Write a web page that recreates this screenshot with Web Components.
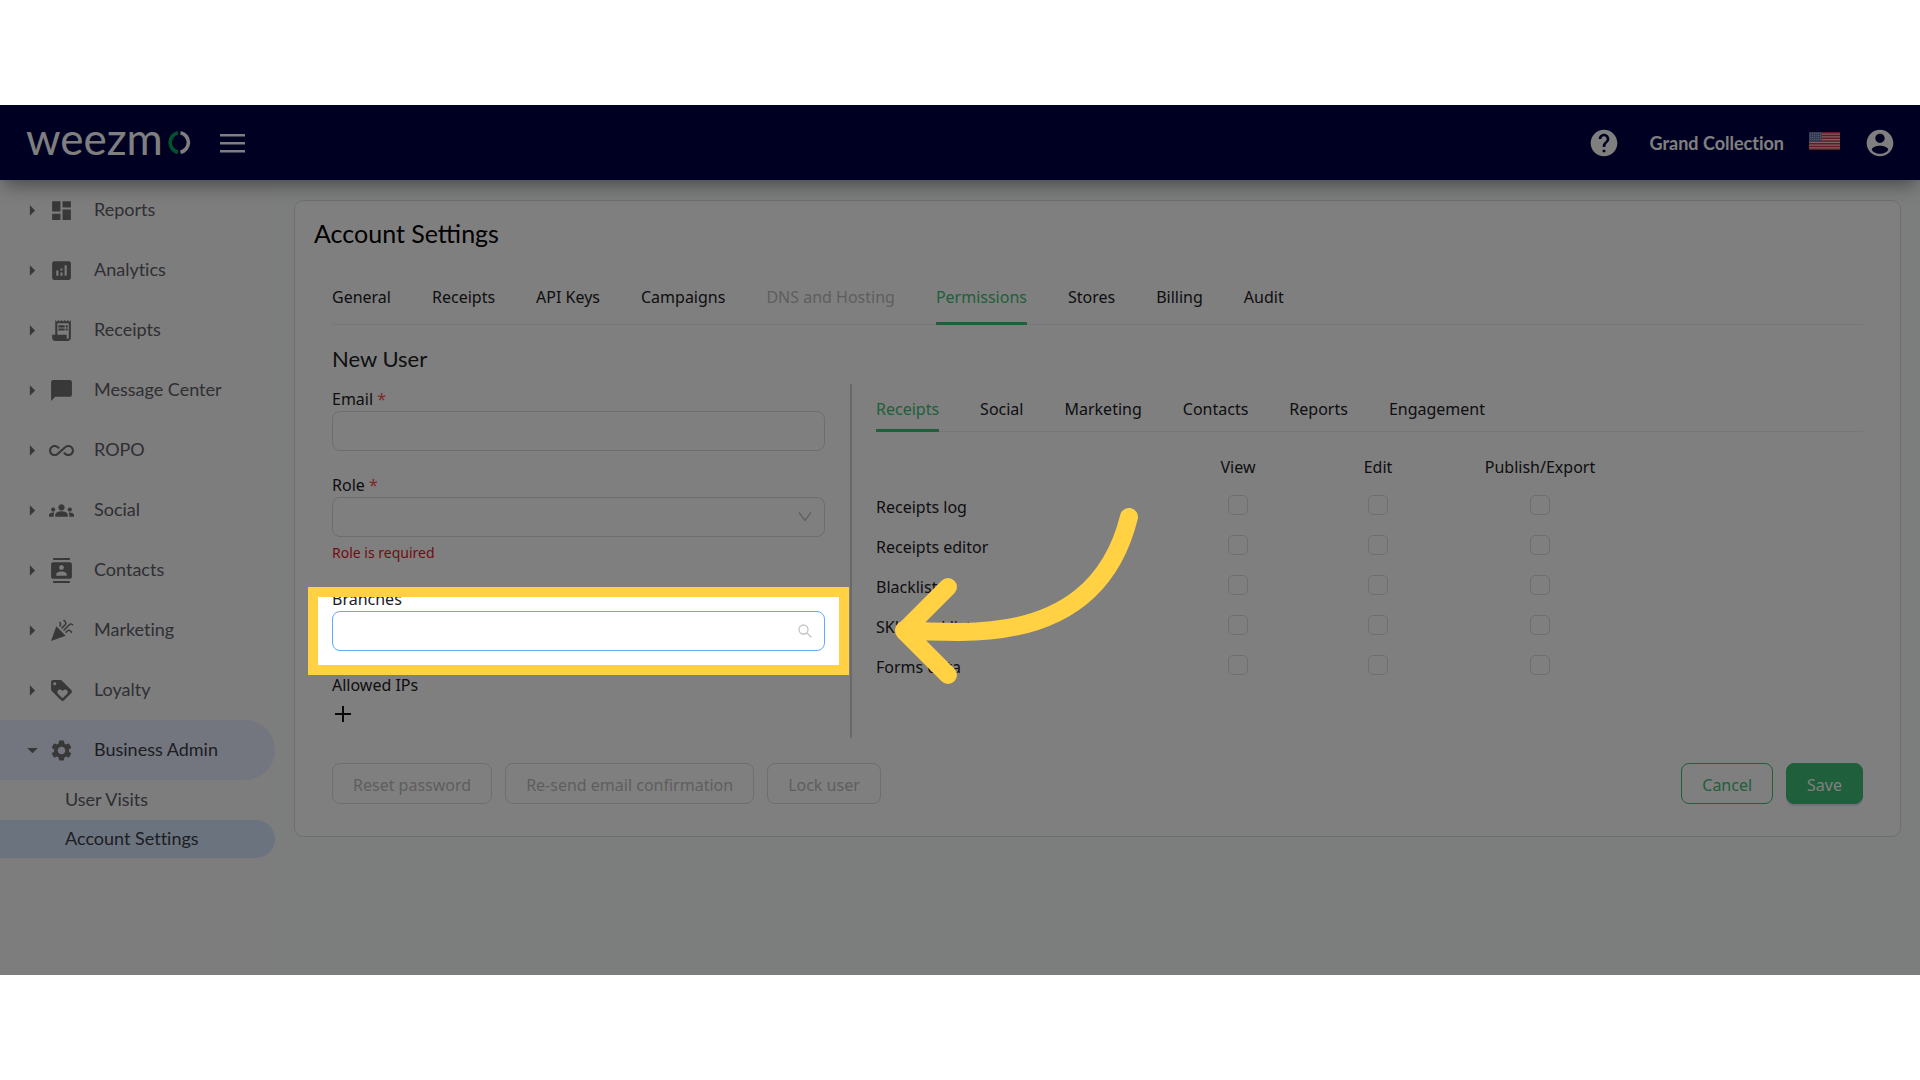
<!DOCTYPE html>
<html lang="en">
<head>
<meta charset="utf-8">
<title>Weezmo – Account Settings</title>
<style>
html,body{margin:0}
body{box-sizing:border-box;min-height:100vh;padding:105px 0;display:flex;flex-direction:column;background:#fff;
 --green:#3ebe76;--text:#202024;--ui:"Noto Sans","Open Sans",sans-serif;--brand:Lato,"Open Sans",sans-serif;
 font-family:var(--ui);font-size:16px;line-height:24px;color:var(--text);font-variant-ligatures:none}
</style>
</head>
<body>
<wz-app>
  <wz-header slot="header" account="Grand Collection"></wz-header>
  <nav slot="nav" aria-label="Main">
    <wz-nav-item icon="dashboard">Reports</wz-nav-item>
    <wz-nav-item icon="analytics">Analytics</wz-nav-item>
    <wz-nav-item icon="receipt">Receipts</wz-nav-item>
    <wz-nav-item icon="chat">Message Center</wz-nav-item>
    <wz-nav-item icon="infinite">ROPO</wz-nav-item>
    <wz-nav-item icon="groups">Social</wz-nav-item>
    <wz-nav-item icon="contacts">Contacts</wz-nav-item>
    <wz-nav-item icon="celebration">Marketing</wz-nav-item>
    <wz-nav-item icon="loyalty">Loyalty</wz-nav-item>
    <wz-nav-item icon="settings" open>Business Admin</wz-nav-item>
    <wz-nav-sub>User Visits</wz-nav-sub>
    <wz-nav-sub active>Account Settings</wz-nav-sub>
  </nav>
  <wz-card heading="Account Settings">
    <wz-tabs items="General,Receipts,API Keys,Campaigns,DNS and Hosting,Permissions,Stores,Billing,Audit" selected="Permissions" disabled="DNS and Hosting" style="--tab-top:12px;--tab-bottom:16px"></wz-tabs>
    <wz-user-form heading="New User">
      <wz-field slot="fields" label="Email" required></wz-field>
      <wz-field slot="fields" label="Role" kind="select" required error="Role is required"></wz-field>
      <wz-field slot="fields" label="Branches" kind="search"><wz-spotlight></wz-spotlight></wz-field>
      <wz-ip-list slot="fields"></wz-ip-list>
      <wz-tabs slot="rights" items="Receipts,Social,Marketing,Contacts,Reports,Engagement" selected="Receipts" style="--tab-top:13px;--tab-bottom:11px"></wz-tabs>
      <wz-rights slot="rights" rows="Receipts log,Receipts editor,Blacklist,SKU blacklist,Forms data" columns="View,Edit,Publish/Export"></wz-rights>
    </wz-user-form>
    <wz-actions></wz-actions>
  </wz-card>
</wz-app>
<script>
const ICONS={
dashboard:'M3 13h8V3H3v10zm0 8h8v-6H3v6zm10 0h8V11h-8v10zm0-18v6h8V3h-8z',
analytics:'M19 3H5c-1.1 0-2 .9-2 2v14c0 1.1.9 2 2 2h14c1.1 0 2-.9 2-2V5c0-1.1-.9-2-2-2zM9 17H7v-5h2v5zm4 0h-2v-3h2v3zm0-5h-2v-2h2v2zm4 5h-2V7h2v10z',
receipt:'M19.5 3.5 18 2l-1.5 1.5L15 2l-1.5 1.5L12 2l-1.5 1.5L9 2 7.5 3.5 6 2v14H3v3c0 1.66 1.34 3 3 3h12c1.66 0 3-1.34 3-3V2l-1.5 1.5zM19 19c0 .55-.45 1-1 1s-1-.45-1-1v-3H8V5h11v14zM9 7h6v2H9zM16 7h2v2h-2zM9 10h6v2H9zM16 10h2v2h-2z',
chat:'M20 2H4c-1.1 0-2 .9-2 2v18l4-4h14c1.1 0 2-.9 2-2V4c0-1.1-.9-2-2-2z',
infinite:'M18.6 6.62c-1.44 0-2.8.56-3.77 1.53L12 10.66 10.48 12h.01L7.8 14.39c-.64.64-1.49.99-2.4.99-1.87 0-3.39-1.51-3.39-3.38S3.53 8.62 5.4 8.62c.91 0 1.76.35 2.44 1.03l1.13 1 1.51-1.34L9.22 8.2C8.2 7.18 6.84 6.62 5.4 6.62 2.42 6.62 0 9.04 0 12s2.42 5.38 5.4 5.38c1.44 0 2.8-.56 3.77-1.53l2.83-2.5.01.01L13.52 12h-.01l2.69-2.39c.64-.64 1.49-.99 2.4-.99 1.87 0 3.39 1.51 3.39 3.38s-1.52 3.38-3.39 3.38c-.9 0-1.76-.35-2.44-1.03l-1.14-1.01-1.51 1.34 1.27 1.12c1.02 1.01 2.37 1.57 3.82 1.57 2.98 0 5.4-2.41 5.4-5.38s-2.42-5.37-5.4-5.37z',
groups:'M12 12.75c1.63 0 3.07.39 4.24.9 1.08.48 1.76 1.56 1.76 2.73V18H6v-1.61c0-1.18.68-2.26 1.76-2.73 1.17-.52 2.61-.91 4.24-.91zM4 13c1.1 0 2-.9 2-2s-.9-2-2-2-2 .9-2 2 .9 2 2 2zm1.13 1.1c-.37-.06-.74-.1-1.13-.1-.99 0-1.93.21-2.78.58C.48 14.9 0 15.62 0 16.43V18h4.5v-1.61c0-.83.23-1.61.63-2.29zM20 13c1.1 0 2-.9 2-2s-.9-2-2-2-2 .9-2 2 .9 2 2 2zm4 3.43c0-.81-.48-1.53-1.22-1.85-.85-.37-1.79-.58-2.78-.58-.39 0-.76.04-1.13.1.4.68.63 1.46.63 2.29V18H24v-1.57zM12 6c1.66 0 3 1.34 3 3s-1.34 3-3 3-3-1.34-3-3 1.34-3 3-3z',
contacts:'M20 0H4v2h16V0zM4 24h16v-2H4v2zM20 4H4c-1.1 0-2 .9-2 2v12c0 1.1.9 2 2 2h16c1.1 0 2-.9 2-2V6c0-1.1-.9-2-2-2zm-8 2.75c1.24 0 2.25 1.01 2.25 2.25s-1.01 2.25-2.25 2.25S9.75 10.24 9.75 9 10.76 6.75 12 6.75zM17 17H7v-1.5c0-1.67 3.33-2.5 5-2.5s5 .83 5 2.5V17z',
celebration:'M2 22l14-5-9-9zM14.53 12.53l5.59-5.59c.49-.49 1.28-.49 1.77 0l.59.59 1.06-1.06-.59-.59c-1.07-1.07-2.82-1.07-3.89 0l-5.59 5.59 1.06 1.06zM10.06 6.88l-.59.59 1.06 1.06.59-.59c1.07-1.07 1.07-2.82 0-3.89l-.59-.59-1.06 1.07.59.59c.48.48.48 1.28 0 1.76zM17.06 11.88l-1.59 1.59 1.06 1.06 1.59-1.59c.49-.49 1.28-.49 1.77 0l1.61 1.61 1.06-1.06-1.61-1.61c-1.08-1.07-2.82-1.07-3.89 0zM15.06 5.88l-3.59 3.59 1.06 1.06 3.59-3.59c1.07-1.07 1.07-2.82 0-3.89l-1.59-1.59-1.06 1.06 1.59 1.59c.48.49.48 1.29 0 1.77z',
loyalty:'M21.41 11.58l-9-9C12.05 2.22 11.55 2 11 2H4c-1.1 0-2 .9-2 2v7c0 .55.22 1.05.59 1.42l9 9c.36.36.86.58 1.41.58.55 0 1.05-.22 1.41-.59l7-7c.37-.36.59-.86.59-1.41 0-.55-.23-1.06-.59-1.42zM5.5 7C4.67 7 4 6.33 4 5.5S4.67 4 5.5 4 7 4.67 7 5.5 6.33 7 5.5 7zm11.77 8.27L13 19.54l-4.27-4.27C8.28 14.81 8 14.19 8 13.5c0-1.38 1.12-2.5 2.5-2.5.69 0 1.32.28 1.77.74l.73.72.73-.73c.45-.45 1.08-.73 1.77-.73 1.38 0 2.5 1.12 2.5 2.5 0 .69-.28 1.32-.73 1.77z',
settings:'M19.14 12.94c.04-.3.06-.61.06-.94 0-.32-.02-.64-.07-.94l2.03-1.58c.18-.14.23-.41.12-.61l-1.92-3.32c-.12-.22-.37-.29-.59-.22l-2.39.96c-.5-.38-1.03-.7-1.62-.94l-.36-2.54c-.04-.24-.24-.41-.48-.41h-3.84c-.24 0-.43.17-.47.41l-.36 2.54c-.59.24-1.13.57-1.62.94l-2.39-.96c-.22-.08-.47 0-.59.22L2.74 8.87c-.12.21-.08.47.12.61l2.03 1.58c-.05.3-.09.63-.09.94s.02.64.07.94l-2.03 1.58c-.18.14-.23.41-.12.61l1.92 3.32c.12.22.37.29.59.22l2.39-.96c.5.38 1.03.7 1.62.94l.36 2.54c.05.24.24.41.48.41h3.84c.24 0 .44-.17.47-.41l.36-2.54c.59-.24 1.13-.56 1.62-.94l2.39.96c.22.08.47 0 .59-.22l1.92-3.32c.12-.22.07-.47-.12-.61l-2.01-1.58zM12 15.6c-1.98 0-3.6-1.62-3.6-3.6s1.62-3.6 3.6-3.6 3.6 1.62 3.6 3.6-1.62 3.6-3.6 3.6z',
help:'M12 2C6.48 2 2 6.48 2 12s4.48 10 10 10 10-4.48 10-10S17.52 2 12 2zm1 17h-2v-2h2v2zm2.07-7.75l-.9.92C13.45 12.9 13 13.5 13 15h-2v-.5c0-1.1.45-2.1 1.17-2.83l1.24-1.26c.37-.36.59-.86.59-1.41 0-1.1-.9-2-2-2s-2 .9-2 2H8c0-2.21 1.79-4 4-4s4 1.79 4 4c0 .88-.36 1.68-.93 2.25z',
account:'M12 2C6.48 2 2 6.48 2 12s4.48 10 10 10 10-4.48 10-10S17.52 2 12 2zm0 3c1.93 0 3.5 1.57 3.5 3.5S13.93 12 12 12s-3.5-1.57-3.5-3.5S10.07 5 12 5zm0 15c-3 0-5.5-1.3-6.2-3.2C6.6 14.9 9.2 14 12 14s5.4.9 6.2 2.8C17.500 18.700 15 20 12 20z',
caretRight:'M9 6l6 6-6 6z',
caretDown:'M6 9h12l-6 6z'
};
const icon=n=>`<svg viewBox="0 0 24 24" aria-hidden="true"><path fill="currentColor" d="${ICONS[n]}"/></svg>`;
const BASE='<style>*{box-sizing:border-box}button,input,select{font:inherit;color:inherit;margin:0}button{border:0;background:none;padding:0}a{color:inherit;text-decoration:none}svg{display:block}</style>';
class Base extends HTMLElement{
  connectedCallback(){ if(!this.shadowRoot) this.attachShadow({mode:'open'}).innerHTML=BASE+this.render(); }
  attr(n){return this.getAttribute(n)||''}
  list(n){return this.attr(n).split(',').filter(Boolean)}
}
const define=(n,f)=>customElements.define(n,class extends Base{render(){return f(this)}});

define('wz-app',()=>`<style>
:host{flex:1;display:flex;flex-direction:column;position:relative;overflow:hidden;background:#f8fcfa}
.body{flex:1;display:flex}
aside{flex:none;width:275px;background:#fafafa}
main{flex:1;min-width:0;padding:20px 19px 0}
</style><slot name="header"></slot><div class="body"><aside><slot name="nav"></slot></aside><main><slot></slot></main></div>`);

define('wz-header',el=>`<style>
:host{box-sizing:border-box;display:flex;align-items:center;height:75px;padding:0 24px 0 26px;background:#000044;color:#fff;position:relative;z-index:1;
 box-shadow:0 8px 18px -4px rgba(0,0,0,.45);font-family:var(--brand)}
.logo{display:flex;align-items:center;font-size:44px;line-height:54px;font-weight:400}
.logo span{margin-top:-10px}
.logo svg{width:24px;height:23px;margin-left:4px}
.menu{margin-left:29px}.menu svg{width:26px;height:20px}
.end{margin-left:auto;display:flex;align-items:center}
.ic svg{width:32px;height:32px}
b{font-size:18px;font-weight:700;margin:0 25px 0 30px}
.flag{width:31px;height:18px;margin:-4px 24px 0 0}
</style>
<a class="logo" href="#" aria-label="weezmo"><span>weezm</span><svg viewBox="0 0 24 23" fill="none" stroke-width="3.600" aria-hidden="true"><path stroke="#00a858" d="M11 1.800A9.900 9.900 0 0 0 11 21.200"/><path stroke="#fff" d="M13.500 1.800A9.900 9.900 0 0 1 13.500 21.200"/></svg></a>
<button class="menu" aria-label="Toggle menu"><svg viewBox="0 0 26 20" fill="#fff"><path d="M0 1h25v2.500H0zM0 9h25v2.500H0zM0 17h25v2.500H0z"/></svg></button>
<div class="end"><button class="ic" aria-label="Help">${icon('help')}</button><b>${el.attr('account')}</b>
<svg class="flag" viewBox="0 0 31 18" role="img" aria-label="English"><path fill="#f4c8cf" d="M0 0h31v18H0z"/><path stroke="#cc3048" stroke-width="1.400" d="M0 .7h31M0 3.460h31M0 6.230h31M0 9h31M0 11.770h31M0 14.540h31M0 17.300h31"/><path fill="#6878a8" d="M0 0h12.500v9.700H0z"/><path stroke="#c8d0e8" stroke-width=".8" stroke-dasharray=".8 1.200" d="M1 1.500h11M1 3.500h11M1 5.500h11M1 7.500h11"/></svg>
<button class="ic" aria-label="Account">${icon('account')}</button></div>`);

define('wz-nav-item',el=>{const open=el.hasAttribute('open');return `<style>
:host{display:block;font-family:var(--brand);font-size:18px;color:#5e5e68}
:host([open]){color:#3c3c46}
a{display:flex;align-items:center;height:60px;padding:0 0 2px 22px;border-radius:0 30px 30px 0}
:host([open]) a{background:#e7ecfe}
.caret,.ic{color:#707070;padding-top:3px}
.caret svg{width:21px;height:21px}
.ic{margin:0 20px 0 6px}.ic svg{width:25px;height:25px}
</style><a href="#" aria-expanded="${open}"><span class="caret">${icon(open?'caretDown':'caretRight')}</span><span class="ic">${icon(el.attr('icon'))}</span><slot></slot></a>`});

define('wz-nav-sub',()=>`<style>
:host{display:block;padding-top:1px;font-family:var(--brand);font-size:18px;color:#5e5e68}
a{display:flex;align-items:center;height:38px;padding:0 0 3px 65px;border-radius:0 19px 19px 0}
:host([active]){color:#3c3c46}
:host([active]) a{background:#d7e7fe}
</style><a href="#"><slot></slot></a>`);

define('wz-card',el=>`<style>
:host{display:block;background:#fff;border:1px solid #dde0de;border-radius:9px;padding:17px 19px 32px}
h1{margin:0 0 25px;font:400 25px/30px var(--brand);color:#000}
.in{padding:0 18px}
</style><h1>${el.attr('heading')}</h1><div class="in"><slot></slot></div>`);

define('wz-tabs',el=>`<style>
:host{display:block}
div{display:flex;gap:41px;box-shadow:inset 0 -1px #efefef}
button{padding:var(--tab-top) 0 var(--tab-bottom);white-space:nowrap}
button[aria-selected=true]{color:var(--green);box-shadow:inset 0 -3px var(--green)}
button:disabled{color:#bdbdbd}
</style><div role="tablist">${el.list('items').map(t=>`<button role="tab" aria-selected="${t===el.attr('selected')}"${t===el.attr('disabled')?' disabled':''}>${t}</button>`).join('')}</div>`);

define('wz-user-form',el=>`<style>
:host{display:block}
h2{margin:20px 0 11px;font:400 22px/28px var(--brand)}
.cols{display:flex}
.left{flex:none;width:520px;display:flex;flex-direction:column;gap:22px;padding:3px 25px 16px 0;border-right:2px solid #d2d2d2}
.right{flex:1;min-width:0;padding-left:24px}
</style><h2>${el.attr('heading')}</h2><div class="cols"><div class="left"><slot name="fields"></slot></div><div class="right"><slot name="rights"></slot></div></div>`);

define('wz-field',el=>{const k=el.attr('kind'),e=el.attr('error');
const ctl=k==='select'
 ?`<select id="c" required><option></option></select><svg viewBox="0 0 14 14" fill="none" stroke="#bfbfbf" stroke-width="1.300"><path d="M1 2.500l6 8 6-8"/></svg>`
 :k==='search'
 ?`<input id="c" type="text" class="focus"><svg viewBox="0 0 14 14" fill="none" stroke="#c4c4c4" stroke-width="1.300"><circle cx="5.500" cy="5.500" r="4.500"/><path d="M9 9l4.500 4.500"/></svg>`
 :`<input id="c" type="email">`;
return `<style>
:host{display:block;position:relative}
label{display:block}
i{font-style:normal;color:#ff4d4f}
.box{display:flex;align-items:center}
input,select{flex:1;min-width:0;height:40px;border:1px solid #dadada;border-radius:8px;background:#fff;padding:0 40px 0 12px;appearance:none;outline:0}
.focus{border-color:#62a8ff}
.box svg{flex:none;width:14px;height:14px;margin:0 13px 0 -27px;pointer-events:none}
p{margin:4px 0 0;font-size:14px;color:#e8161c}
</style><label for="c">${el.attr('label')}${el.hasAttribute('required')?' <i>*</i>':''}</label><div class="box">${ctl}</div>${e?`<p>${e}</p>`:''}<slot></slot>`});

define('wz-ip-list',()=>`<style>
:host{display:block}
button{display:block;margin:9px 0 0 3px}svg{width:16px;height:16px}
</style><div>Allowed IPs</div><button aria-label="Add IP"><svg viewBox="0 0 16 16" stroke="#111" stroke-width="2"><path d="M8 0v16M0 8h16"/></svg></button>`);

define('wz-rights',el=>`<style>
:host{display:block;margin-top:13px}
table{border-collapse:collapse;table-layout:fixed;width:756px;max-width:100%}
col.n{width:292px}col.p{width:184px}
th,td{height:40px;padding:0;font-weight:400;text-align:center}
th{padding-top:4px}
tbody th{text-align:left}
input{appearance:none;display:block;margin:0 auto;width:20px;height:20px;border:1px solid #dcdcdc;border-radius:5px;background:#fff}
</style><table><colgroup><col class="n"><col><col><col class="p"></colgroup><thead><tr><td></td>${el.list('columns').map(c=>`<th scope="col">${c}</th>`).join('')}</tr></thead><tbody>${el.list('rows').map(r=>`<tr><th scope="row">${r}</th>${el.list('columns').map(c=>`<td><input type="checkbox" aria-label="${r}: ${c}"></td>`).join('')}</tr>`).join('')}</tbody></table>`);

define('wz-actions',()=>`<style>
:host{display:flex;gap:13px;margin-top:25px}
button{height:41px;padding:2px 20px 0;border:1px solid #dcdcdc;border-radius:8px;white-space:nowrap}
button:disabled{color:#bdbdbd}
.cancel{margin-left:auto;border-color:var(--green);color:var(--green)}
.save{background:var(--green);border-color:var(--green);color:#fff;box-shadow:0 2px 1px #e6e0f4}
</style><button disabled>Reset password</button><button disabled>Re-send email confirmation</button><button disabled>Lock user</button><button class="cancel">Cancel</button><button class="save">Save</button>`);

/* Walkthrough highlight: dims everything outside its frame and points at it. */
define('wz-spotlight',()=>`<style>
:host{position:absolute;z-index:5;top:0;left:-24px;right:-24px;bottom:-24px;pointer-events:none;border:10px solid #ffd143;box-shadow:0 0 0 2400px rgba(0,0,0,.5)}
svg{position:absolute;left:576px;top:-89px;width:246px;height:180px}
</style><svg viewBox="894 508 246 180" fill="none" stroke="#ffd143" stroke-width="18" stroke-linecap="round" stroke-linejoin="round" aria-hidden="true"><path d="M1129 517C1114 577 1072 633 957 632Q930 632 904 630M948 587L904 631L948 675"/></svg>`);
</script>
</body>
</html>
